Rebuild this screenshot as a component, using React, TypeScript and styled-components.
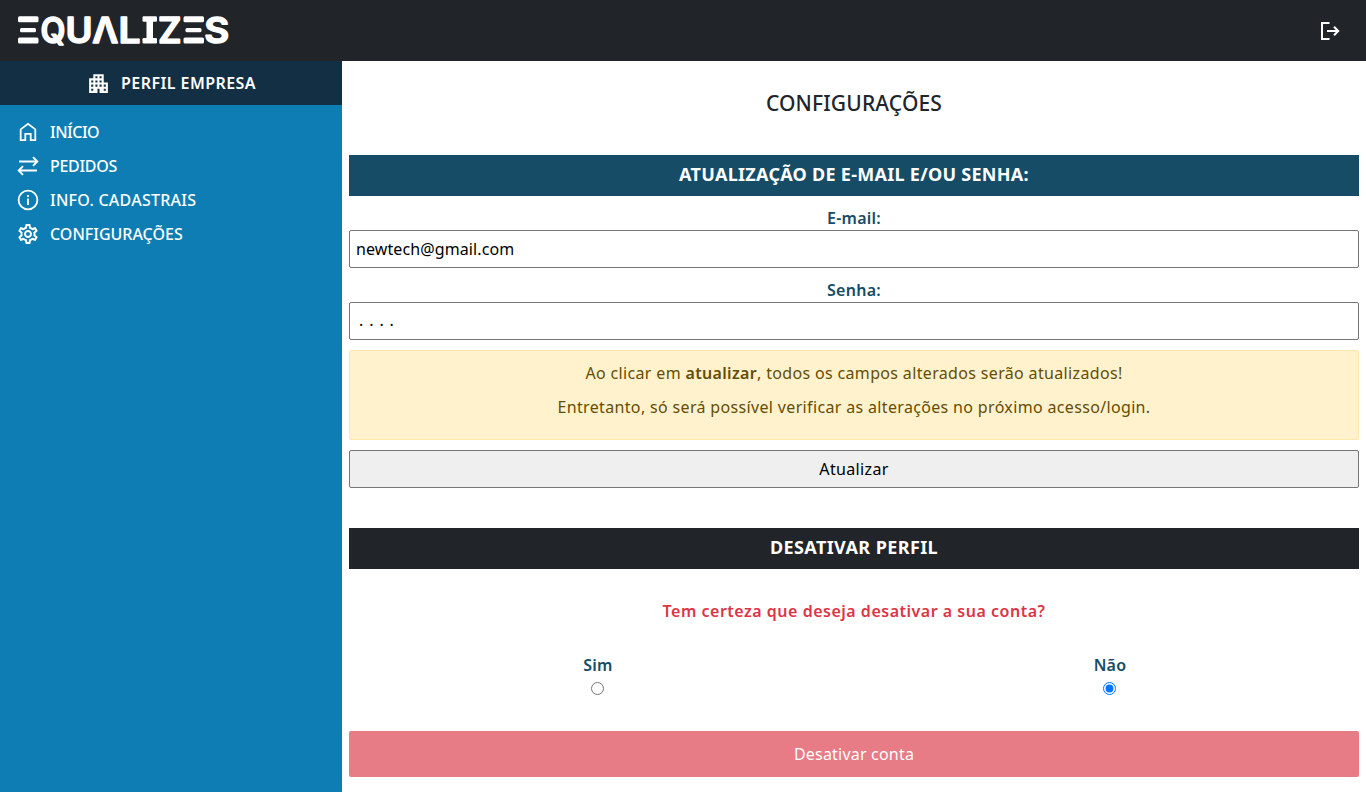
import React, { useState } from "react";
import styled, { createGlobalStyle } from "styled-components";
import { MdApartment, MdOutlineSettings } from "react-icons/md";

const GlobalStyle = createGlobalStyle`
  *, *::before, *::after { box-sizing: border-box; }
  body {
    margin: 0;
    background: #fff;
    color: #212529;
    font: 400 16px/24px "Noto Sans", sans-serif;
  }
`;

const Page = styled.div`
  display: flex;
  flex-direction: column;
  height: 792px;
  overflow: hidden;
`;

const TopBar = styled.header`
  display: flex;
  align-items: center;
  justify-content: space-between;
  flex: none;
  height: 61px;
  padding: 0 24px 0 16px;
  background: #212529;
  color: #fff;
`;

const Logo = styled.svg`
  display: block;
  overflow: visible;
  fill: #fff;

  text {
    font-family: Inter, sans-serif;
    font-size: 35px;
    font-weight: 600;
    line-height: 1;
    stroke: #fff;
    stroke-width: 1.5px;
    stroke-linejoin: round;
  }
`;

const IconButton = styled.button`
  display: flex;
  padding: 0;
  border: 0;
  background: none;
  color: inherit;
`;

const Body = styled.div`
  display: flex;
  flex: 1;
  min-height: 0;
`;

const Sidebar = styled.aside`
  flex: none;
  width: 342px;
  background: #0d7db4;
  color: #fff;
`;

const ProfileBar = styled.div`
  display: flex;
  align-items: center;
  justify-content: center;
  gap: 10px;
  height: 44px;
  background: #132f43;
  font-weight: 600;
  letter-spacing: 0.42px;
`;

const Menu = styled.nav`
  display: flex;
  flex-direction: column;
  gap: 10px;
  padding: 15px 16px;
`;

const MenuItem = styled.a<{ $spacing?: number }>`
  display: flex;
  align-items: center;
  gap: 10px;
  height: 24px;
  font-weight: 500;
  letter-spacing: ${(p) => p.$spacing ?? 0}px;

  svg { flex: none; }
`;

const Content = styled.main`
  display: flex;
  flex-direction: column;
  flex: 1;
  padding: 0 7px;
`;

const Title = styled.h1`
  margin: 30px 0 40px;
  font-size: 21px;
  font-weight: 500;
  line-height: 24px;
  text-align: center;
  letter-spacing: 0.15px;
`;

const Ribbon = styled.h2<{ $tone: string; $spacing: number }>`
  margin: 0;
  height: 41px;
  background: ${(p) => p.$tone};
  color: #fff;
  font-size: 18px;
  font-weight: 700;
  line-height: 39px;
  text-align: center;
  letter-spacing: ${(p) => p.$spacing}px;
`;

const Field = styled.label`
  display: flex;
  flex-direction: column;
  margin-top: 10px;
`;

const Label = styled.span`
  color: #164c66;
  font-weight: 600;
  text-align: center;
  letter-spacing: 0.25px;
`;

const Input = styled.input`
  height: 38px;
  padding: 1px 6px;
  border: 1px solid #767676;
  border-radius: 2px;
  background: #fff;
  color: #000;
  font: inherit;
  letter-spacing: 0.1px;
  outline: none;
`;

const PasswordInput = styled(Input)`
  padding: 0 9px 3px;
  letter-spacing: 5.9px;
`;

const Notice = styled.div`
  height: 90px;
  margin: 10px 0;
  padding: 10px;
  border: 1px solid #ffe8ac;
  border-radius: 2px;
  background: #fff2cd;
  color: #664d03;
  text-align: center;
  letter-spacing: 0.34px;

  p { margin: 0 0 10px; }
  b { font-weight: 600; }
`;

const UpdateButton = styled.button`
  height: 38px;
  margin-bottom: 40px;
  padding: 0;
  border: 1px solid #767676;
  border-radius: 2px;
  background: #efefef;
  color: #000;
  font: inherit;
  letter-spacing: 0.35px;
`;

const Question = styled.p`
  margin: 30px 0;
  color: #dc3545;
  font-weight: 600;
  text-align: center;
  letter-spacing: 0.51px;
`;

const Options = styled.div`
  display: flex;
  margin: 0 -7px;
`;

const Option = styled.label`
  display: flex;
  flex: 1;
  flex-direction: column;
  align-items: center;
`;

const Radio = styled.input`
  width: 13px;
  height: 13px;
  margin: 5px 0.5px 36px 0;
`;

const DangerButton = styled.button`
  height: 46px;
  padding: 0;
  border: 0;
  border-radius: 2px;
  background: #e77b86;
  color: #fff;
  font: inherit;
  letter-spacing: 0.2px;
`;

const HomeIcon = () => (
  <svg width="24" height="24" viewBox="0 0 24 24" fill="none" stroke="currentColor" strokeWidth="1.8">
    <path d="M4.7 20.2V9.4L12 3.9l7.3 5.5v10.8h-4.6v-6.4H9.3v6.4z" />
  </svg>
);

const SwapIcon = () => (
  <svg width="24" height="24" viewBox="0 0 24 24" fill="none" stroke="currentColor" strokeWidth="1.9">
    <path d="M3 7.5h18M17 3.2l4.3 4.3-4.3 4.3M21 16.5H3M7 12.2l-4.3 4.3L7 20.8" />
  </svg>
);

const InfoIcon = () => (
  <svg width="24" height="24" viewBox="0 0 24 24" fill="none" stroke="currentColor" strokeWidth="1.8">
    <circle cx="12" cy="12" r="9.4" />
    <path d="M12 7v2M12 10.6V17" />
  </svg>
);

const LogoutIcon = () => (
  <svg width="24" height="24" viewBox="0 0 24 24" fill="none" stroke="currentColor" strokeWidth="2">
    <path d="M11.5 3.9H4v16.2h7.5M9 12h11.5M16 7.8l4.2 4.2-4.2 4.2" />
  </svg>
);

const Bars = ({ x }: { x: number }) => (
  <>
    <rect x={x} y="2.3" width="20.5" height="6" rx="1.5" />
    <rect x={x + 2} y="14" width="16" height="4.3" rx="1.5" />
    <rect x={x} y="23.5" width="20.5" height="6" rx="1.5" />
  </>
);

const letters = [
  { char: "Q", x: 24.5, width: 25 },
  { char: "U", x: 49.5, width: 27 },
  { char: "Λ", x: 76.3, width: 26 },
  { char: "L", x: 102.5, width: 22 },
  { char: "Z", x: 142, width: 23.5 },
  { char: "S", x: 188.3, width: 25 },
];

const Wordmark = () => (
  <Logo width="216" height="34" viewBox="0 0 216 34" role="img" aria-label="Equalizes">
    <Bars x={2} />
    {letters.map((l) => (
      <text key={l.char} x={l.x} y="28.6" textLength={l.width} lengthAdjust="spacingAndGlyphs">
        {l.char}
      </text>
    ))}
    <rect x="126.5" y="2.3" width="14.5" height="5.5" rx="1.3" />
    <rect x="130.5" y="4" width="6.5" height="22" />
    <rect x="126.5" y="24" width="14.5" height="5.5" rx="1.3" />
    <Bars x={167.5} />
  </Logo>
);

export default function App() {
  const [email, setEmail] = useState("newtech@gmail.com");
  const [password, setPassword] = useState("....");
  const [confirm, setConfirm] = useState(false);

  return (
    <>
      <GlobalStyle />
      <Page>
        <TopBar>
          <Wordmark />
          <IconButton aria-label="Sair"><LogoutIcon /></IconButton>
        </TopBar>
        <Body>
          <Sidebar>
            <ProfileBar>
              <MdApartment size={25} />
              PERFIL EMPRESA
            </ProfileBar>
            <Menu>
              <MenuItem $spacing={-0.5}><HomeIcon />INÍCIO</MenuItem>
              <MenuItem $spacing={-0.3}><SwapIcon />PEDIDOS</MenuItem>
              <MenuItem $spacing={0.25}><InfoIcon />INFO. CADASTRAIS</MenuItem>
              <MenuItem><MdOutlineSettings size={24} />CONFIGURAÇÕES</MenuItem>
            </Menu>
          </Sidebar>
          <Content>
            <Title>CONFIGURAÇÕES</Title>
            <Ribbon $tone="#164c66" $spacing={0.28}>ATUALIZAÇÃO DE E-MAIL E/OU SENHA:</Ribbon>
            <Field>
              <Label>E-mail:</Label>
              <Input value={email} onChange={(e) => setEmail(e.target.value)} />
            </Field>
            <Field>
              <Label>Senha:</Label>
              <PasswordInput value={password} onChange={(e) => setPassword(e.target.value)} />
            </Field>
            <Notice>
              <p>Ao clicar em <b>atualizar</b>, todos os campos alterados serão atualizados!</p>
              <p>Entretanto, só será possível verificar as alterações no próximo acesso/login.</p>
            </Notice>
            <UpdateButton>Atualizar</UpdateButton>
            <Ribbon $tone="#212529" $spacing={0.4}>DESATIVAR PERFIL</Ribbon>
            <Question>Tem certeza que deseja desativar a sua conta?</Question>
            <Options>
              <Option>
                <Label>Sim</Label>
                <Radio type="radio" name="confirm" checked={confirm} onChange={() => setConfirm(true)} />
              </Option>
              <Option>
                <Label>Não</Label>
                <Radio type="radio" name="confirm" checked={!confirm} onChange={() => setConfirm(false)} />
              </Option>
            </Options>
            <DangerButton>Desativar conta</DangerButton>
          </Content>
        </Body>
      </Page>
    </>
  );
}
